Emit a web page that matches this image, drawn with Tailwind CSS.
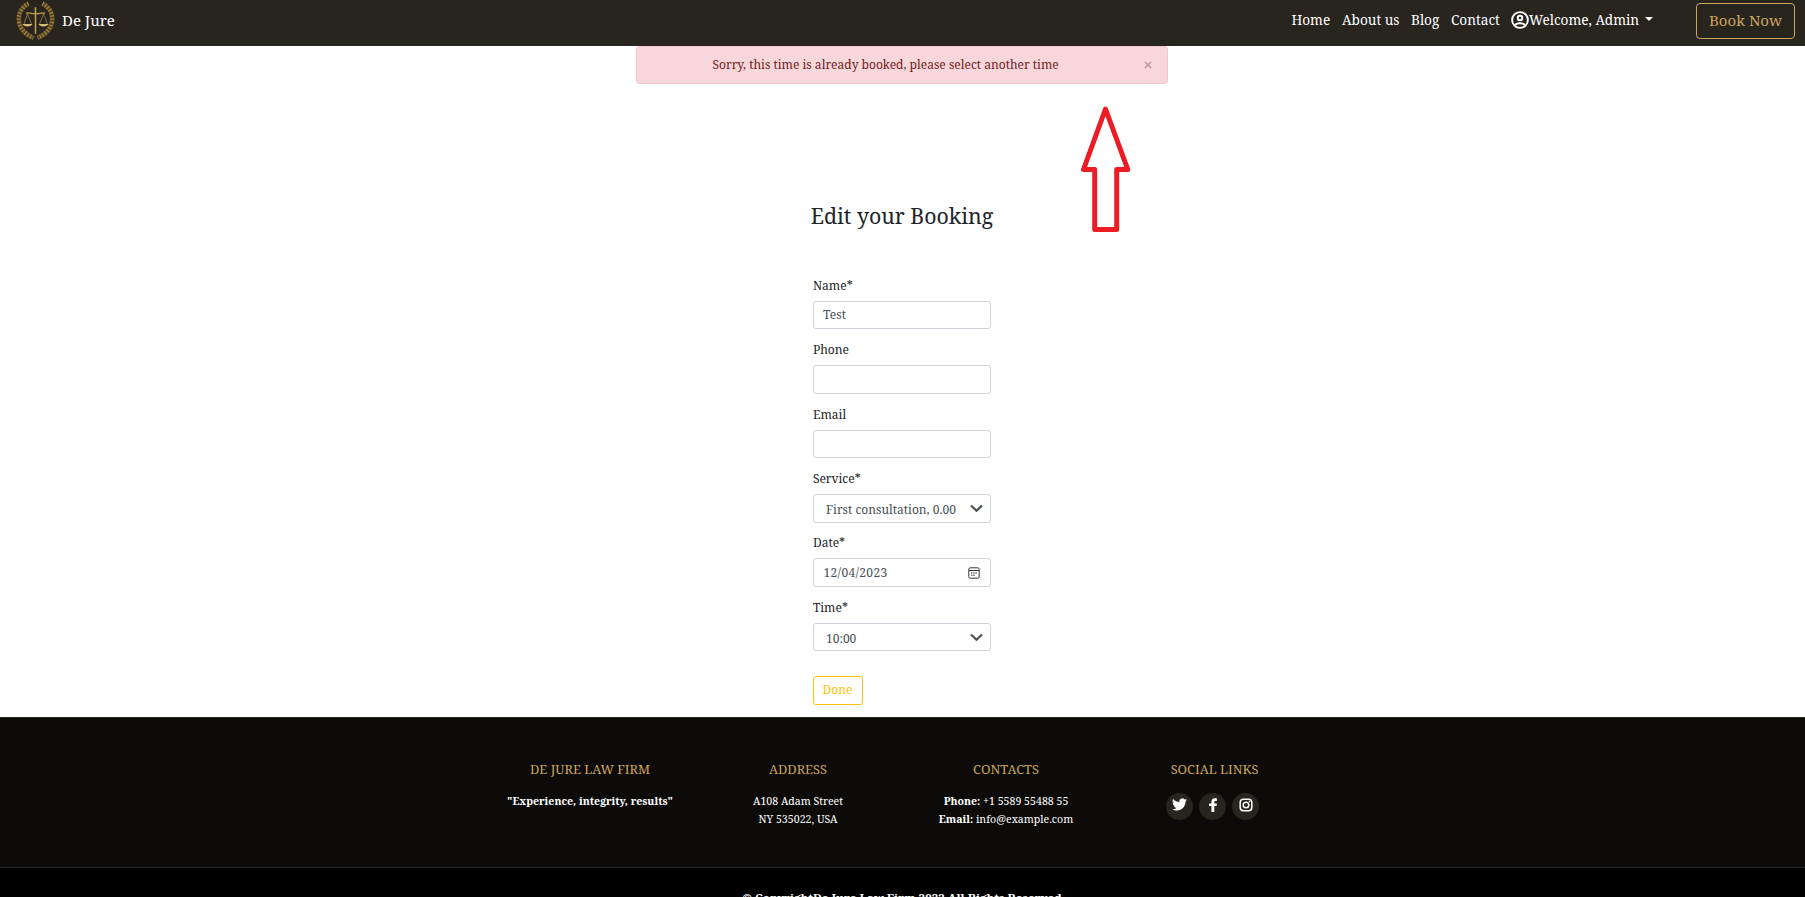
<!DOCTYPE html>
<html lang="en">
<head>
<meta charset="utf-8">
<title>De Jure</title>
<script src="https://cdn.jsdelivr.net/npm/@tailwindcss/browser@4"></script>
</head>
<body class="h-[897px] overflow-hidden bg-white font-['Noto_Serif','DejaVu_Serif',serif] text-[12.04px] leading-[18px] text-[#212529]">

<header class="flex h-[46px] items-start bg-[#28251f] text-white">
  <a class="flex items-start">
    <svg class="ml-4 h-[41px] w-[39px]" viewBox="0 0 39 40" preserveAspectRatio="none" fill="none">
      <g stroke="#5d4a24" stroke-width="4.6">
        <path d="M12.500 3.500C-1 10-1.500 29 17.500 37"/>
        <path d="M26.500 3.500C40 10 40.500 29 21.500 37"/>
      </g>
      <g stroke="#a98843" stroke-width="4.2" stroke-dasharray="1 2.100">
        <path d="M12.500 3.500C-1 10-1.500 29 17.500 37"/>
        <path d="M26.500 3.500C40 10 40.500 29 21.500 37"/>
      </g>
      <g stroke="#c29a48">
        <path d="M19.500 7v26" stroke-width="1.600"/>
        <path d="M10 13c4-1.500 6 1.500 9.500 0 3.500 1.500 5.500-1.500 9.500 0" stroke-width="1.200"/>
        <path d="M11.500 13.500 8 23.500M11.500 13.500l4 10M27.500 13.500l-4 10M27.500 13.500l4 10" stroke-width=".6"/>
      </g>
      <path d="M6.500 23.500h10c-1 3-9 3-10 0ZM22.500 23.500h10c-1 3-9 3-10 0Z" fill="#d9bc75"/>
    </svg>
    <span class="ml-[7px] mt-2 text-[15px] leading-6">De Jure</span>
  </a>
  <nav class="ml-auto mt-2 flex text-[13.600px] leading-6">
    <a class="w-[50.500px]">Home</a>
    <a class="w-[69px]">About us</a>
    <a class="w-10">Blog</a>
    <a class="w-[60px]">Contact</a>
    <a class="flex w-[185px] items-center">
      <svg class="-mt-px size-[18px] shrink-0" viewBox="0 0 18 18" fill="none" stroke="#fff" stroke-width="1.900"><circle cx="9" cy="9" r="7.900"/><circle cx="9" cy="7" r="2.300"/><path d="M4.200 14.300c1-2.800 8.600-2.800 9.600 0"/></svg>
      <span class="whitespace-nowrap">Welcome, Admin</span>
      <i class="ml-1.5 -mt-[3px] border-x-4 border-t-4 border-x-transparent border-t-white"></i>
    </a>
  </nav>
  <a class="mr-[10px] mt-[3px] flex h-9 w-[99px] items-center justify-center rounded-[4px] border border-[#cda45e] pb-0.5 text-[15.050px] text-[#cda45e]">Book Now</a>
</header>

<main class="relative h-[671px] pr-[2px]">
  <div class="mx-auto flex h-[38px] w-[532px] items-center rounded-[3px] border border-[#f5c6cb] bg-[#f8d7da] text-[#721c24]">
    <span class="ml-[76px] whitespace-nowrap">Sorry, this time is already booked, please select another time</span>
    <svg class="ml-auto mr-[15px] -mt-px size-[8px]" viewBox="0 0 9 9" stroke="#c39a9e" stroke-width="1.700"><path d="m1 1 7 7m0-7L1 8"/></svg>
  </div>
  <svg class="absolute left-[1076px] top-[58px] h-[134px] w-[60px]" viewBox="0 0 60 134" fill="none" stroke="#ed1c24" stroke-width="5" stroke-linejoin="round"><path d="M29.500 5 7.500 65.500h11.200v60h22v-60h11.100Z"/></svg>
  <h1 class="mt-[119px] pl-px text-center text-[21.300px] leading-[26px]">Edit your Booking</h1>
  <form class="mx-auto mt-[47.700px] w-[178px]">
    <label class="mb-[6.050px] block pl-[.4px]">Name*</label>
    <div class="mb-[11.900px] flex h-[28.500px] items-center rounded-[3px] border border-[#ced4da] px-[9.500px] text-[#495057]">Test</div>
    <label class="mb-[6.050px] block pl-[.4px]">Phone</label>
    <div class="mb-[11.900px] h-[28.500px] rounded-[3px] border border-[#ced4da]"></div>
    <label class="mb-[6.050px] block pl-[.4px]">Email</label>
    <div class="mb-[11.900px] h-[28.500px] rounded-[3px] border border-[#ced4da]"></div>
    <label class="mb-[6.050px] block pl-[.4px]">Service*</label>
    <div class="mb-[11.900px] flex h-[28.500px] items-center justify-between rounded-[3px] border border-[#ced4da] pl-[12.500px] pr-[7px] pt-[3px] text-[#495057]">
      <span class="whitespace-nowrap">First consultation, 0.00</span>
      <svg class="-mt-[3px] h-[9px] w-[13px]" viewBox="0 0 13 9" fill="none" stroke="#495057" stroke-width="2.200"><path d="m1 1.500 5.500 5.200L12 1.500"/></svg>
    </div>
    <label class="mb-[6.050px] block pl-[.4px]">Date*</label>
    <div class="mb-[11.900px] flex h-[28.500px] items-center justify-between rounded-[3px] border border-[#ced4da] pl-2.5 pr-2.5 text-[#495057]">
      <span class="tracking-[0.330px]">12/04/2023</span>
      <svg class="size-3" viewBox="0 0 12 12" fill="none" stroke="#333"><rect x=".8" y=".8" width="10.400" height="10.400" rx="1.500"/><path d="M1 3.500h10"/><path d="M3 6h6M3 8.200h4" stroke-dasharray="1.500 .700"/></svg>
    </div>
    <label class="mb-[6.050px] block pl-[.4px]">Time*</label>
    <div class="flex h-[28.500px] items-center justify-between rounded-[3px] border border-[#ced4da] pl-[12.500px] pr-[7px] pt-[3px] text-[#495057]">
      <span>10:00</span>
      <svg class="-mt-[3px] h-[9px] w-[13px]" viewBox="0 0 13 9" fill="none" stroke="#495057" stroke-width="2.200"><path d="m1 1.500 5.500 5.200L12 1.500"/></svg>
    </div>
    <button type="button" class="mt-[24.500px] flex h-[29px] w-[50px] items-center justify-center rounded-[3px] border border-[#ffc107] pb-px text-[#ffc107]">Done</button>
  </form>
</main>

<footer class="text-center text-[10.600px] leading-[18px] text-white">
  <div class="h-[151px] border-y border-[#28251f] bg-[#0c0b09]">
    <div class="mx-auto grid w-[832px] grid-cols-4 pt-[42px]">
      <section class="-ml-px"><h4 class="mb-[14px] text-[12.850px] leading-[18px] text-[#cda45e]">DE JURE LAW FIRM</h4><p class="font-bold">"Experience, integrity, results"</p></section>
      <section class="-ml-px"><h4 class="mb-[14px] text-[12.850px] leading-[18px] text-[#cda45e]">ADDRESS</h4><p>A108 Adam Street<br>NY 535022, USA</p></section>
      <section class="-ml-px"><h4 class="mb-[14px] text-[12.850px] leading-[18px] text-[#cda45e]">CONTACTS</h4><p><b>Phone:</b> +1 5589 55488 55<br><b>Email:</b> info@example.com</p></section>
      <section><h4 class="mb-[14px] text-[12.800px] leading-[18px] text-[#cda45e]">SOCIAL LINKS</h4>
        <div class="-ml-1 mt-[15px] flex justify-center gap-1.5">
          <a class="flex size-[27px] justify-center rounded-full bg-[#28251f] pt-1"><svg class="size-[15px]" viewBox="0 0 24 24" fill="#fff"><path d="M23.950 4.570a10 10 0 0 1-2.820.770 4.960 4.960 0 0 0 2.160-2.720 9.900 9.900 0 0 1-3.120 1.190 4.920 4.920 0 0 0-8.390 4.480A13.980 13.980 0 0 1 1.640 3.160a4.920 4.920 0 0 0 1.520 6.570 4.900 4.900 0 0 1-2.230-.610v.060a4.920 4.920 0 0 0 3.950 4.830 5 5 0 0 1-2.210.080 4.940 4.940 0 0 0 4.600 3.420A9.870 9.870 0 0 1 0 19.540a14 14 0 0 0 7.550 2.210c9.050 0 14-7.500 14-13.980l-.020-.640a9.940 9.940 0 0 0 2.420-2.560Z"/></svg></a>
          <a class="flex size-[27px] justify-center rounded-full bg-[#28251f] pt-1"><svg class="size-4" viewBox="0 0 24 24" fill="#fff"><path d="M14 22.500v-9h3.300l.6-3.900H14V7.600c0-1 .4-1.700 1.900-1.700h1.900V2.200c-.400 0-1.800-.200-3.100-.200-3 0-5.100 1.800-5.100 4.900v2.700H6v3.900h3.600v9Z"/></svg></a>
          <a class="flex size-[27px] justify-center rounded-full bg-[#28251f] pt-1"><svg class="size-4" viewBox="0 0 16 16" fill="none" stroke="#fff" stroke-width="1.500"><rect x="2.200" y="2.200" width="11.600" height="11.600" rx="3.200"/><circle cx="8" cy="8" r="2.800"/><circle cx="11.500" cy="4.500" r=".8" fill="#fff" stroke="none"/></svg></a>
        </div>
      </section>
    </div>
  </div>
  <div class="h-[29px] bg-black pr-px pt-[21px] text-[11.590px] font-bold">© CopyrightDe Jure Law Firm 2022 All Rights Reserved</div>
</footer>
</body>
</html>
